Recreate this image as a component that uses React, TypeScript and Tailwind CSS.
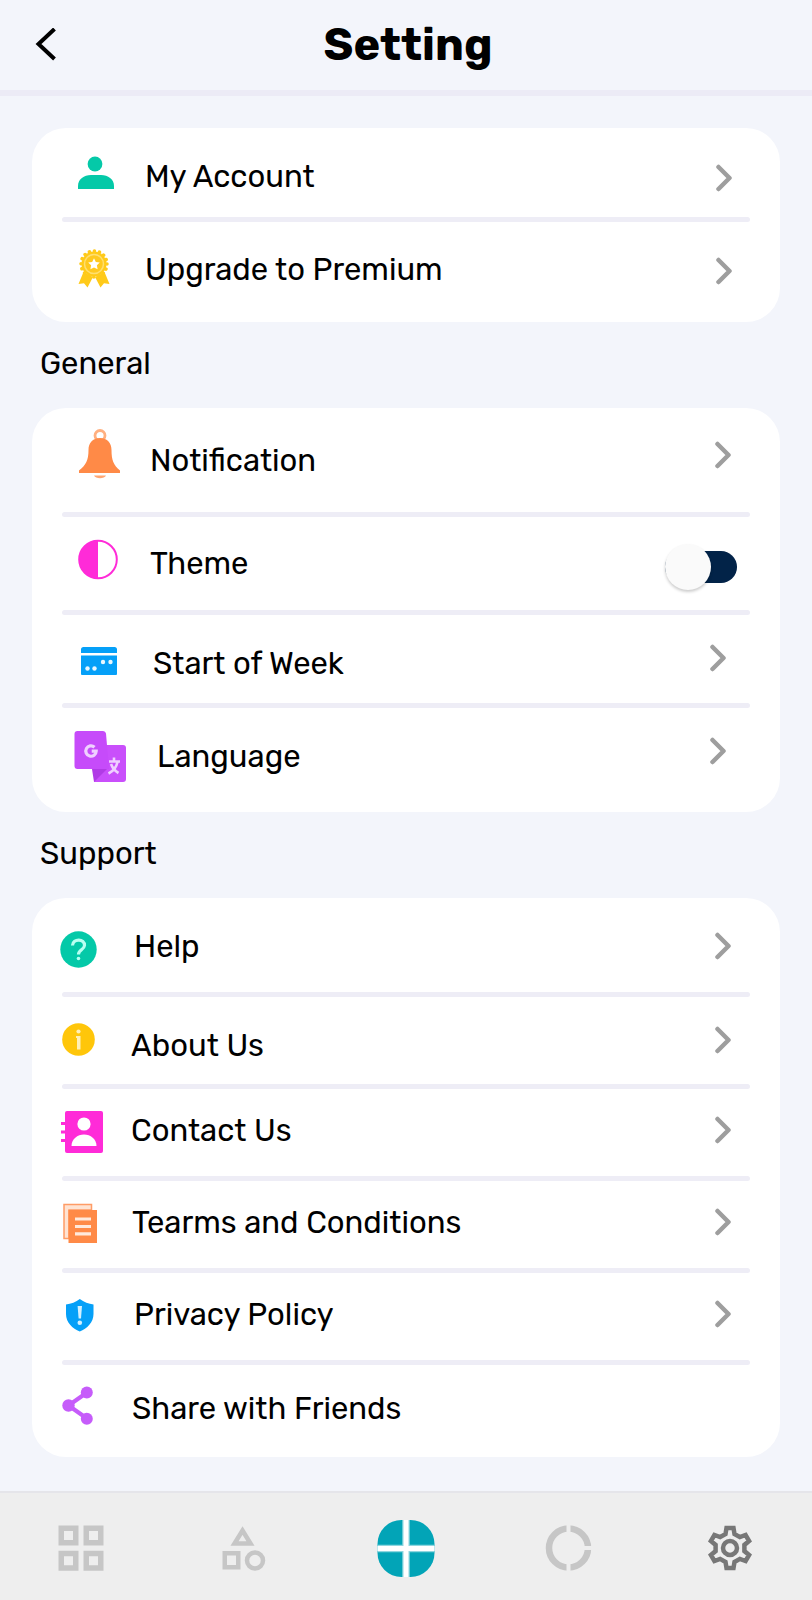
import React, { useState } from "react";

type RowProps = {
  icon: React.ReactNode;
  label: string;
  pad: string;
  chevron?: string;
};

function Chevron() {
  return (
    <svg width="18" height="28" viewBox="0 0 18 28" fill="none" stroke="#9e9e9e" strokeWidth="4.5" strokeLinecap="round" strokeLinejoin="round" aria-hidden="true">
      <path d="M3.5 3 14.5 14 3.5 25" />
    </svg>
  );
}

function Row({ icon, label, pad, chevron = "pr-12" }: RowProps) {
  return (
    <button type="button" className={`flex w-full items-center gap-7 text-left ${pad}`}>
      {icon}
      <span className="flex-1 pt-0.5 text-[31px] leading-10">{label}</span>
      {chevron !== "none" && (
        <span className={chevron}>
          <Chevron />
        </span>
      )}
    </button>
  );
}

function Divider() {
  return <div className="mx-[30px] h-[5px] rounded-sm bg-[#eeedf6]" />;
}

function Card({ children }: { children: React.ReactNode }) {
  return <section className="rounded-[34px] bg-white">{children}</section>;
}

function GroupTitle({ children }: { children: React.ReactNode }) {
  return <h2 className="px-2 pt-[22px] pb-6 text-[31px] leading-10">{children}</h2>;
}

function Icon({ width, children }: { width: string; children: React.ReactNode }) {
  return (
    <svg className={`h-[60px] shrink-0 overflow-visible ${width}`} aria-hidden="true">
      {children}
    </svg>
  );
}

const accountIcon = (
  <Icon width="w-[43px]">
    <g fill="#04c9a8">
      <circle cx="21" cy="18" r="7.4" />
      <path d="M4 43v-3c0-7 6-11 13-11h10c7 0 13 4 13 11v3z" />
    </g>
  </Icon>
);

const medalIcon = (
  <Icon width="w-[43px]">
    <path d="M9.500 33 4.500 45l5.500-.8 3.500 4.300 5.500-10.500zM30.500 33l5 12-5.500-.8-3.500 4.300L21 38z" fill="#ffca1a" />
    <circle cx="20" cy="25" r="12.500" fill="#ffca1a" />
    <circle cx="20" cy="25" r="13" fill="none" stroke="#ffca1a" strokeWidth="3.500" strokeLinecap="round" strokeDasharray="0.100 5.006" />
    <circle cx="20" cy="25" r="9.500" fill="#ffc91f" stroke="#ffdf70" strokeWidth="1.500" />
    <path d="m20 19.200 1.800 3.700 4 .6-2.900 2.800.7 4-3.600-1.900-3.600 1.900.7-4-2.900-2.800 4-.6z" fill="#fff" />
  </Icon>
);

const bellIcon = (
  <Icon width="w-12">
    <circle cx="26" cy="5.500" r="5" fill="none" stroke="#ffb080" strokeWidth="2.800" />
    <path d="M26 8c7.500 0 11.500 5 11.500 12 0 10 2 15 8.500 20.500V43H5v-2.500C12 35 14.500 30 14.500 20 14.500 13 18.500 8 26 8z" fill="#ff8a47" />
    <path d="M20 45.500h12c-1.500 3.500-10.500 3.500-12 0z" fill="#ffa673" />
  </Icon>
);

const themeIcon = (
  <Icon width="w-12">
    <circle cx="24" cy="26.500" r="18.800" fill="none" stroke="#ff2bd8" strokeWidth="2" />
    <path d="M24 7.500a19 19 0 0 0 0 38z" fill="#ff2bd8" />
  </Icon>
);

const weekIcon = (
  <Icon width="w-[51px]">
    <path d="M7 20v-3.500a2.500 2.500 0 0 1 2.500-2.500h31a2.500 2.500 0 0 1 2.500 2.500V20zM7 22.500h36V41a1 1 0 0 1-1 1H8a1 1 0 0 1-1-1z" fill="#05a0f8" />
    <g fill="#e8f7ff">
      <circle cx="29" cy="29" r="2.200" />
      <circle cx="36.500" cy="29" r="2.200" />
      <circle cx="13.500" cy="35.500" r="2.200" />
      <circle cx="20.500" cy="35.500" r="2.200" />
    </g>
  </Icon>
);

const languageIcon = (
  <Icon width="w-[55px]">
    <path d="M21 19h28a3 3 0 0 1 3 3v31a3 3 0 0 1-3 3H20z" fill="#c94ffb" />
    <path d="M3.500 5H29a3 3 0 0 1 3 2.500L35 43H3.500A3 3 0 0 1 .500 40V8a3 3 0 0 1 3-3z" fill="#c64bfa" />
    <path d="M18 43h15L20 56z" fill="#b13be6" />
    <path d="M20.500 21.200a5.200 5.200 0 1 0 1.700 4h-4.500" fill="none" stroke="#efd0ff" strokeWidth="3.200" />
    <path d="M35 35.500h11M40 31.500v4M43.500 36c-1 5-4 9-9 11.500M37 38c1.500 4 4 7 7.500 9" fill="none" stroke="#efd0ff" strokeWidth="2.600" />
  </Icon>
);

const helpIcon = (
  <Icon width="w-[46px]">
    <circle cx="18.500" cy="33.500" r="18.200" fill="#04c9a8" />
    <path d="M12.500 29.500c.3-7.500 12.500-7 12 0-.3 4.300-6.200 4.300-6 9" fill="none" stroke="#b9fff1" strokeWidth="3.200" />
    <circle cx="18.500" cy="42.500" r="1.800" fill="#b9fff1" />
  </Icon>
);

const aboutIcon = (
  <Icon width="w-[43px]">
    <circle cx="18.500" cy="24.500" r="16.300" fill="#ffc60a" />
    <circle cx="18.500" cy="16.500" r="2.100" fill="#fff0b8" />
    <path d="M16 21h4.500v13.500h-3.500V23H16z" fill="#fff0b8" />
  </Icon>
);

const contactIcon = (
  <Icon width="w-[43px]">
    <rect x="5" y="11" width="38" height="42" rx="2" fill="#ff2bd8" />
    <path d="M1 23.500h5M1 32h5M1 40.500h5" stroke="#ff2bd8" strokeWidth="3.200" />
    <circle cx="24" cy="24" r="6.600" fill="#fff" />
    <path d="M11.500 46c0-7 6-11.500 12.500-11.500S36.500 39 36.500 46z" fill="#fff" />
  </Icon>
);

const termsIcon = (
  <Icon width="w-11">
    <path d="M4 46.500v-34h27.500V18H9v28.500z" fill="#ffe3d2" stroke="#ff9c66" strokeWidth="1.500" />
    <rect x="8.500" y="18" width="28.500" height="33" fill="#ff8a47" />
    <path d="M15 27h16M15 34.500h16M15 41.800h16" stroke="#ffe9dc" strokeWidth="3.200" />
  </Icon>
);

const privacyIcon = (
  <Icon width="w-[46px]">
    <path d="M19.800 15c4 3 9 5 13.700 5.500V30c0 8.500-6.500 14.500-13.700 17.500C12.500 44.500 6 38.500 6 30v-9.500C11 20 16 18 19.800 15z" fill="#05a0f8" />
    <path d="M17.600 22h4.400l-1 12.500h-2.400z" fill="#d2f0ff" />
    <circle cx="19.800" cy="38.800" r="2.300" fill="#d2f0ff" />
  </Icon>
);

const shareIcon = (
  <Icon width="w-11">
    <path d="M27 14.500 8.500 27.500 27 40.500" fill="none" stroke="#c65cfa" strokeWidth="4.200" />
    <g fill="#c65cfa">
      <circle cx="8.500" cy="27.500" r="6.200" />
      <circle cx="26.800" cy="14.500" r="6" />
      <circle cx="26.800" cy="40.700" r="6" />
    </g>
  </Icon>
);

function ThemeRow() {
  const [on, setOn] = useState(false);
  return (
    <label className="flex cursor-pointer items-center gap-7 pt-4 pr-[43px] pb-[17px] pl-[42px]">
      {themeIcon}
      <span className="flex-1 pt-0.5 text-[31px] leading-10">Theme</span>
      <input type="checkbox" role="switch" className="sr-only" checked={on} onChange={(e) => setOn(e.target.checked)} />
      <span className="pt-2">
        <span className="flex h-8 w-[72px] items-center rounded-full bg-[#022348]">
          <span className={`size-[46px] shrink-0 rounded-full bg-[#fafafa] shadow-[0_2px_3px_rgba(0,0,0,0.2)] ${on ? "ml-auto" : ""}`} />
        </span>
      </span>
    </label>
  );
}

function NavItem({ label, children }: { label: string; children: React.ReactNode }) {
  return (
    <a href="#" aria-label={label} className="flex flex-1 justify-center">
      <svg width="60" height="60" viewBox="0 0 60 60" fill="none" aria-hidden="true">
        {children}
      </svg>
    </a>
  );
}

export default function App() {
  return (
    <div className="flex min-h-screen flex-col bg-[#f3f5fb] font-['Rubik','Inter',sans-serif] text-black">
      <header className="grid grid-cols-[80px_1fr_80px] items-center border-b-[6px] border-[#ecebf6]">
        <button type="button" aria-label="Back" className="pl-[34px]">
          <svg width="24" height="34" viewBox="0 0 24 34" fill="none" stroke="#000" strokeWidth="4" aria-hidden="true">
            <path d="M20.500 1 4.500 16 20.500 31" />
          </svg>
        </button>
        <h1 className="pl-1 text-center text-[45px] leading-[90px] font-bold">Setting</h1>
      </header>

      <main className="flex-1 px-8 pt-8 pb-[34px]">
        <Card>
          <Row icon={accountIcon} label="My Account" pad="pt-[18px] pb-[11px] pl-[42px]" chevron="pt-1 pr-[47px]" />
          <Divider />
          <Row icon={medalIcon} label="Upgrade to Premium" pad="pt-[17px] pb-[23px] pl-[42px]" chevron="pt-1 pr-[47px]" />
        </Card>

        <GroupTitle>General</GroupTitle>
        <Card>
          <Row icon={bellIcon} label="Notification" pad="pt-[22px] pb-[22px] pl-[42px]" chevron="pr-12 pb-2.5" />
          <Divider />
          <ThemeRow />
          <Divider />
          <Row icon={weekIcon} label="Start of Week" pad="pt-[18px] pb-2.5 pl-[42px]" chevron="pr-[53px] pb-2.5" />
          <Divider />
          <Row icon={languageIcon} label="Language" pad="pt-[18px] pb-[26px] pl-[42px]" chevron="pr-[53px] pb-2.5" />
        </Card>

        <GroupTitle>Support</GroupTitle>
        <Card>
          <Row icon={helpIcon} label="Help" pad="pt-[18px] pb-4 pl-7" />
          <Divider />
          <Row icon={aboutIcon} label="About Us" pad="pt-[18px] pb-[9px] pl-7" chevron="pr-12 pb-2.5" />
          <Divider />
          <Row icon={contactIcon} label="Contact Us" pad="pt-[11px] pb-4 pl-7" />
          <Divider />
          <Row icon={termsIcon} label="Tearms and Conditions" pad="pt-[11px] pb-4 pl-7" />
          <Divider />
          <Row icon={privacyIcon} label="Privacy Policy" pad="pt-[11px] pb-4 pl-7" />
          <Divider />
          <Row icon={shareIcon} label="Share with Friends" pad="pt-[13px] pb-[19px] pl-7" chevron="none" />
        </Card>
      </main>

      <nav className="flex border-t-2 border-[#e5e5ea] bg-[#eeeeee] pt-[25px] pb-[22px]">
        <NavItem label="Dashboard">
          <g stroke="#c6c6c6" strokeWidth="5.500">
            <rect x="10.250" y="10.250" width="14.500" height="14.500" />
            <rect x="35.250" y="10.250" width="14.500" height="14.500" />
            <rect x="10.250" y="35.500" width="14.500" height="14.500" />
            <rect x="35.250" y="35.500" width="14.500" height="14.500" />
          </g>
        </NavItem>
        <NavItem label="Categories">
          <g stroke="#c6c6c6" strokeWidth="4.500">
            <path d="M28.500 12.500 36.500 25.500h-16z" />
            <rect x="10.750" y="35.250" width="13.500" height="14" />
            <circle cx="41" cy="42.500" r="8" />
          </g>
        </NavItem>
        <NavItem label="Add">
          <rect x="1.500" y="2" width="57" height="57" rx="24" fill="#02a4b7" />
          <path d="M30 2v57M1.500 30.500h57" stroke="#8fd6df" strokeWidth="7.500" />
          <path d="M30 2v57M1.500 30.500h57" stroke="#fff" strokeWidth="5" />
        </NavItem>
        <NavItem label="Reports">
          <circle cx="30.500" cy="30" r="19.500" stroke="#c6c6c6" strokeWidth="6.500" />
          <path d="M30.500 4v10M30.500 46v10M46 30h10" stroke="#eeeeee" strokeWidth="4" />
        </NavItem>
        <NavItem label="Settings">
          <g transform="translate(29 30)" stroke="#777" strokeWidth="4.500">
            <path d="M-3.500-20h7l1 6 5.400 3.100 5.700-2.100 3.500 6-4.700 3.900v6.200l4.700 3.900-3.500 6-5.700-2.100L4.500 14l-1 6h-7l-1-6-5.400-3.100-5.700 2.100-3.500-6 4.700-3.900v-6.200l-4.700-3.900 3.500-6 5.700 2.100L-4.500-14z" />
            <circle r="7" />
          </g>
        </NavItem>
      </nav>
    </div>
  );
}
